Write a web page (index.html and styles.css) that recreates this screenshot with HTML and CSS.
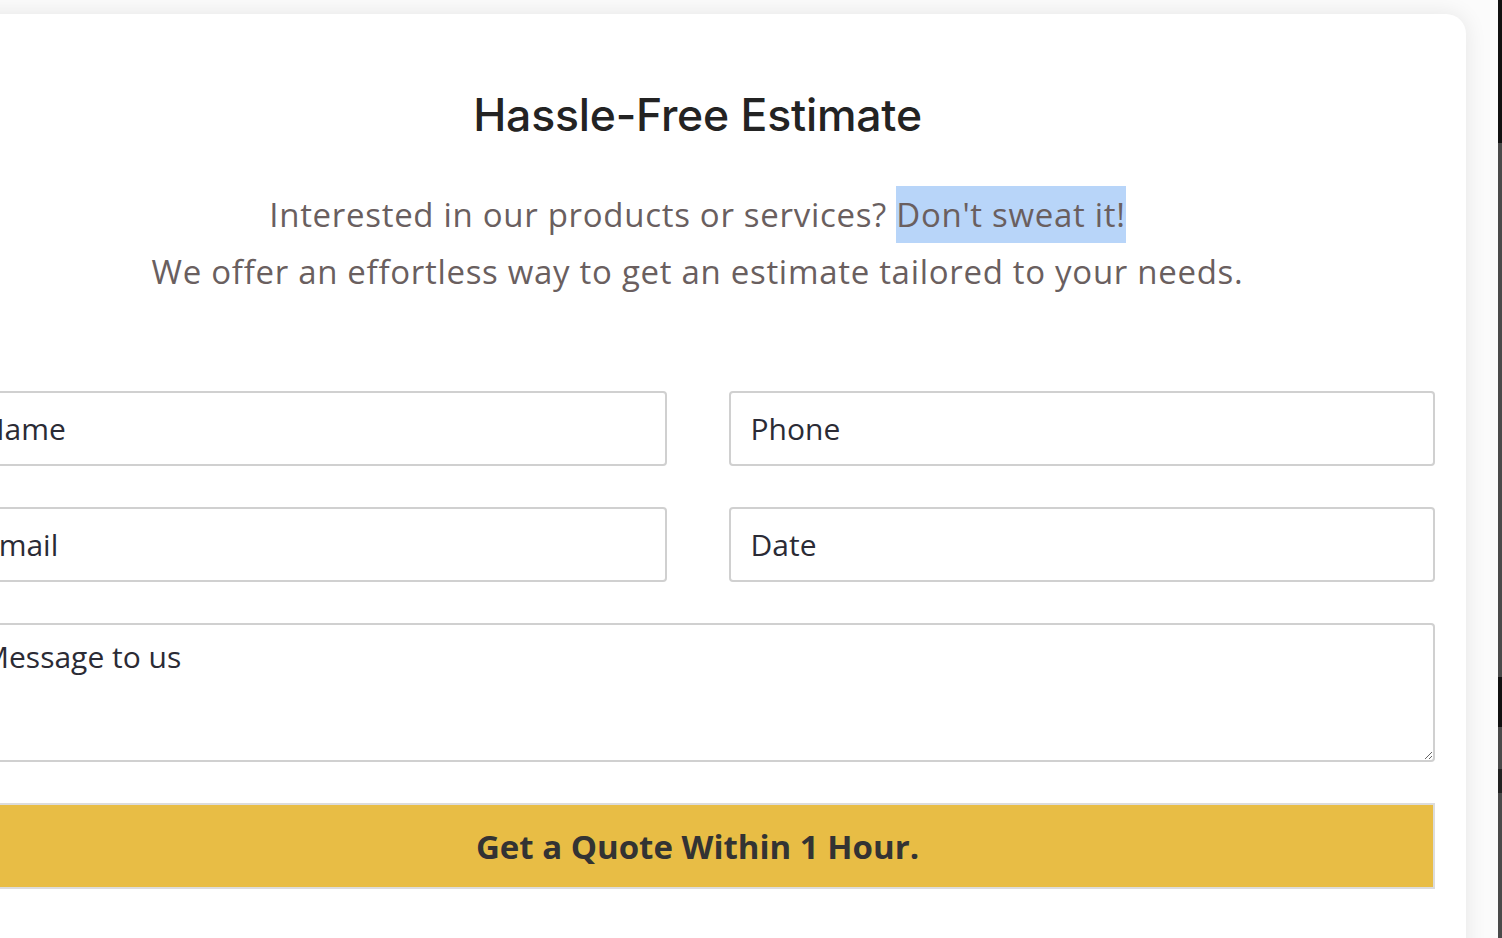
FILE: index.html
```html
<!DOCTYPE html>
<html lang="en">
<head>
<meta charset="utf-8">
<title>Hassle-Free Estimate</title>
<link rel="stylesheet" href="styles.css">
</head>
<body>
<div class="screen">
  <div class="viewport">
    <section class="card">
      <h1 class="title">Hassle-Free Estimate</h1>
      <p class="lead">Interested in our products or services? <span class="sel">Don't sweat it!</span><br>We offer an effortless way to get an estimate tailored to your needs.</p>
      <form class="form">
        <input class="field" type="text" placeholder="Name">
        <input class="field" type="text" placeholder="Phone">
        <input class="field" type="text" placeholder="Email">
        <input class="field" type="text" placeholder="Date">
        <textarea class="field area" placeholder="Message to us"></textarea>
        <button class="submit" type="button">Get a Quote Within 1 Hour.</button>
      </form>
    </section>
  </div>
  <div class="edge"></div>
</div>
</body>
</html>
```
FILE: styles.css
```css
html, body {
  margin: 0;
  padding: 0;
  height: 100%;
}
body {
  background: #fbfbfb;
  overflow: hidden;
}
.screen {
  display: flex;
  height: 938px;
}
.viewport {
  flex: 1;
  overflow: hidden;
  padding-top: 14px;
}
.edge {
  width: 4px;
  background: linear-gradient(to bottom, #111 0, #111 143px, #4a4a4a 143px, #4a4a4a 677px, #111 677px, #111 727px, #4a4a4a 727px, #4a4a4a 769px, #222 769px, #222 793px, #4a4a4a 793px);
}
.card {
  box-sizing: border-box;
  width: 1537px;
  margin-left: -71px;
  min-height: 1000px;
  background: #fff;
  border-radius: 20px;
  box-shadow: 0 0 22px rgba(0, 0, 0, 0.09);
  padding: 73px 31px 60px;
}
.title {
  margin: 0;
  text-align: center;
  font-family: Inter, "Noto Sans", sans-serif;
  font-weight: 500;
  font-size: 44.5px;
  line-height: 56px;
  color: #232323;
  letter-spacing: -0.2px;
}
.lead {
  margin: 43px 0 0;
  text-align: center;
  font-family: "Open Sans", "Noto Sans", sans-serif;
  font-size: 33px;
  letter-spacing: 0.7px;
  line-height: 57px;
  color: #6a5f5f;
}
.line-one {
  word-spacing: 1px;
}
.sel {
  display: inline-block;
  background: #b8d5f9;
  line-height: 57px;
}
.form {
  margin-top: 91px;
  display: grid;
  grid-template-columns: 1fr 1fr;
  column-gap: 62px;
  row-gap: 41px;
}
.field {
  box-sizing: border-box;
  width: 100%;
  height: 75px;
  border: 2px solid #d0d0d0;
  border-radius: 4px;
  padding: 0 20px;
  font-family: "Open Sans", "Noto Sans", sans-serif;
  font-size: 30px;
  color: #2b2b35;
  background: #fff;
  outline: none;
}
.field::placeholder {
  color: #2b2b35;
  opacity: 1;
}
.area {
  grid-column: 1 / -1;
  height: 139px;
  padding: 11px 20px;
  resize: vertical;
}
.submit {
  grid-column: 1 / -1;
  height: 86px;
  border: 2px solid #dcdcdc;
  border-radius: 0;
  background: #e8bd45;
  font-family: "Open Sans", "Noto Sans", sans-serif;
  font-weight: 700;
  font-size: 33px;
  color: #333;
  cursor: pointer;
}
```
